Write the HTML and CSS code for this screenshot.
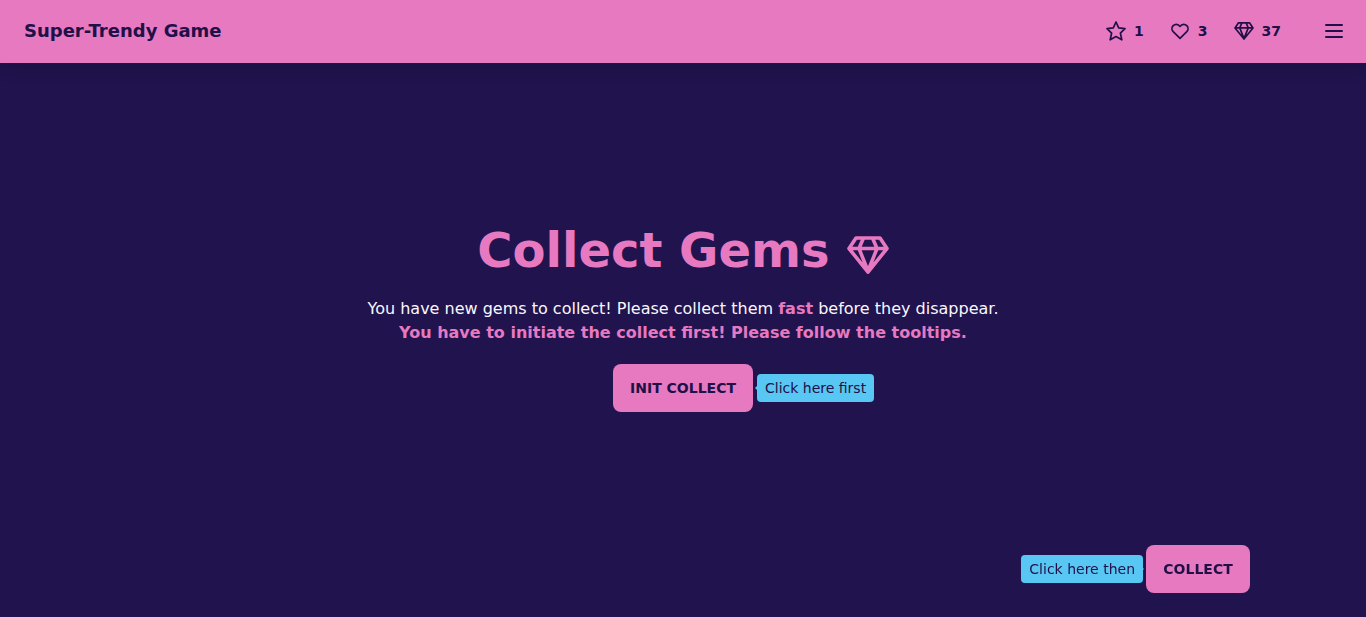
FILE: index.html
```
<!DOCTYPE html>
<html lang="en">
<head>
  <meta charset="utf-8">
  <meta name="viewport" content="width=device-width, initial-scale=1">
  <title>Super-Trendy Game</title>
  <link rel="stylesheet" href="styles.css">
</head>
<body>
  <svg class="sprite" aria-hidden="true">
    <symbol id="gem" viewBox="0 0 42 38">
      <path d="M9 2H33L40 12.5 21 36 2 12.5ZM2 12.5H40M16.5 2 12 12.5 21 35 30 12.5 25.5 2"/>
    </symbol>
  </svg>
  <header class="navbar">
    <a class="brand" href="#">Super-Trendy Game</a>
    <div class="stats">
      <span class="stat">
        <svg class="icon" viewBox="0 0 24 24" aria-hidden="true"><path d="M12 3 14.7 8.9 21 9.6 16.4 14.2 17.8 20.8 12 17.6 6.2 20.8 7.6 14.2 3 9.6 9.3 8.9Z"/></svg>
        1
      </span>
      <span class="stat">
        <svg class="icon" viewBox="0 0 24 24" aria-hidden="true"><path d="M12 19.3 5.2 12.6C3.5 10.8 3.6 8.2 5.2 6.6 7 4.9 9.6 4.9 11.2 6.6L12 7.4 12.8 6.6C14.4 4.9 17 4.9 18.8 6.6 20.4 8.2 20.5 10.8 18.8 12.6Z"/></svg>
        3
      </span>
      <span class="stat">
        <svg class="icon icon-gem" aria-hidden="true"><use href="#gem"/></svg>
        37
      </span>
    </div>
    <button class="menu" type="button" aria-label="Menu">
      <svg class="icon" viewBox="0 0 24 24" aria-hidden="true"><path d="M4 6H20M4 12H20M4 18H20"/></svg>
    </button>
  </header>
  <main class="hero">
    <h1 class="title">Collect Gems <svg class="title-gem" aria-hidden="true"><use href="#gem"/></svg></h1>
    <p class="text">You have new gems to collect! Please collect them <strong class="accent">fast</strong> before they disappear.<br><strong class="accent">You have to initiate the collect first! Please follow the tooltips.</strong></p>
    <div class="action">
      <button class="btn" type="button" aria-describedby="tip-first">Init collect</button>
      <span class="tooltip tooltip-right" id="tip-first" role="tooltip">Click here first</span>
    </div>
  </main>
  <div class="action action-corner">
    <button class="btn" type="button" aria-describedby="tip-then">Collect</button>
    <span class="tooltip tooltip-left" id="tip-then" role="tooltip">Click here then</span>
  </div>
</body>
</html>
```
FILE: styles.css
```
* {
  box-sizing: border-box;
}

body {
  display: flex;
  flex-direction: column;
  min-height: 100vh;
  margin: 0;
  background: #20134e;
  color: #f9f7fd;
  font-family: "DejaVu Sans", sans-serif;
  font-size: 16px;
  line-height: 24px;
}

.sprite {
  position: absolute;
  width: 0;
  height: 0;
}

.navbar {
  display: flex;
  align-items: center;
  min-height: 63px;
  padding: 0 20px 1px 24px;
  background: #e779c1;
  color: #201047;
  box-shadow: 0 10px 15px -3px rgba(0, 0, 0, 0.1), 0 4px 6px -2px rgba(0, 0, 0, 0.05);
}

.brand {
  color: inherit;
  font-size: 18px;
  font-weight: 700;
  text-decoration: none;
}

.stats {
  display: flex;
  gap: 24px;
  margin-left: auto;
}

.stat {
  display: flex;
  align-items: center;
  gap: 6px;
  font-size: 14px;
  font-weight: 700;
}

.icon {
  display: block;
  width: 24px;
  height: 24px;
  fill: none;
  stroke: currentColor;
  stroke-width: 1.7;
  stroke-linejoin: round;
}

.icon-gem {
  width: 20px;
  height: 18px;
  margin: 0 2px;
  stroke-width: 3.5;
}

.menu {
  margin-left: 41px;
  padding: 0;
  border: 0;
  background: none;
  color: inherit;
  cursor: pointer;
}

.menu .icon {
  stroke-width: 2;
  stroke-linecap: round;
}

.hero {
  display: flex;
  flex: 1;
  flex-direction: column;
  align-items: center;
  justify-content: center;
  padding: 16px 16px 58px;
  text-align: center;
}

.title {
  display: flex;
  align-items: center;
  gap: 17px;
  margin: 0;
  color: #e779c1;
  font-size: 48px;
  line-height: 48px;
}

.title-gem {
  width: 42px;
  height: 38px;
  margin-top: 9px;
  fill: none;
  stroke: currentColor;
  stroke-width: 3.6;
  stroke-linejoin: round;
}

.text {
  margin: 23px 0 19px;
}

.accent {
  color: #e779c1;
}

.action {
  position: relative;
}

.action-corner {
  position: fixed;
  right: 116px;
  bottom: 24px;
}

.btn {
  display: block;
  min-width: 104px;
  height: 48px;
  padding: 0 17px;
  border: 0;
  border-radius: 8px;
  background: #e779c1;
  color: #201047;
  font: 700 14px "DejaVu Sans", sans-serif;
  text-transform: uppercase;
  cursor: pointer;
}

.tooltip {
  position: absolute;
  top: 10px;
  padding: 4px 8px;
  border-radius: 4px;
  background: #58c7f3;
  color: #201047;
  font-size: 14px;
  line-height: 20px;
  white-space: nowrap;
}

.tooltip::after {
  position: absolute;
  top: 12px;
  border: 2px solid transparent;
  content: "";
}

.tooltip-right {
  left: calc(100% + 4px);
}

.tooltip-right::after {
  right: 100%;
  border-right-color: #58c7f3;
  border-left: 0;
}

.tooltip-left {
  right: calc(100% + 3px);
}

.tooltip-left::after {
  left: calc(100% - 1px);
  border-right: 0;
  border-left-color: #58c7f3;
}
```
